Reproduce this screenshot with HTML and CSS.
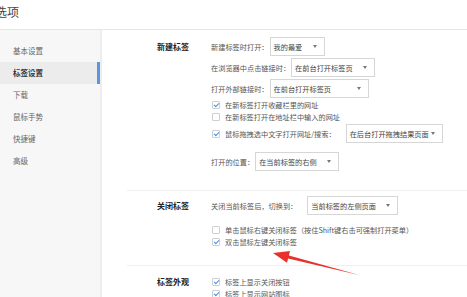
FILE: index.html
```html
<!DOCTYPE html>
<html>
  <head>
    <meta charset="utf-8" />
    <title>选项</title>
    <link rel="stylesheet" href="styles.css">
  </head>

  <body>
    <!-- 顶部标题 -->
    <div class="header">
      <h1 class="title">选项</h1>
    </div>

    <div class="layout">
      <!-- 左侧导航 -->
      <ul class="sidebar">
        <li class="nav-item">基本设置</li>
        <li class="nav-item active">标签设置</li>
        <li class="nav-item">下载</li>
        <li class="nav-item">鼠标手势</li>
        <li class="nav-item">快捷键</li>
        <li class="nav-item">高级</li>
      </ul>

      <!-- 右侧设置内容 -->
      <div class="content">
        <div class="section sec-new">
          <div class="sec-title">新建标签</div>
          <div class="sec-body">
            <div class="row">新建标签时打开：<span class="select sel-home">我的最爱<i class="caret"></i></span></div>
            <div class="row">在浏览器中点击链接时：<span class="select sel-click">在前台打开标签页<i class="caret"></i></span></div>
            <div class="row">打开外部链接时：<span class="select sel-ext">在前台打开标签页<i class="caret"></i></span></div>
            <div class="row check"><span class="box on"></span>在新标签打开收藏栏里的网址</div>
            <div class="row check"><span class="box"></span>在新标签打开在地址栏中输入的网址</div>
            <div class="row"><span class="box on"></span>鼠标拖拽选中文字打开网址/搜索：<span class="select sel-drag">在后台打开拖拽结果页面<i class="caret"></i></span></div>
            <div class="row spaced">打开的位置：<span class="select sel-pos">在当前标签的右侧<i class="caret"></i></span></div>
          </div>
        </div>

        <div class="section sec-close">
          <div class="sec-title">关闭标签</div>
          <div class="sec-body">
            <div class="row">关闭当前标签后，切换到：<span class="select sel-close">当前标签的左侧页面<i class="caret"></i></span></div>
            <div class="row check spaced-lg"><span class="box"></span>单击鼠标右键关闭标签（按住Shift键右击可强制打开菜单）</div>
            <div class="row check"><span class="box on"></span>双击鼠标左键关闭标签</div>
          </div>
        </div>

        <div class="section sec-look">
          <div class="sec-title short">标签外观</div>
          <div class="sec-body">
            <div class="row check"><span class="box on"></span>标签上显示关闭按钮</div>
            <div class="row check"><span class="box on"></span>标签上显示网站图标</div>
          </div>
        </div>
      </div>
    </div>

    <!-- 红色标注箭头 -->
    <svg class="arrow" width="467" height="297" viewBox="0 0 467 297">
      <polygon points="273,253 290,251.1 288.9,255.4 360,275.3 288.1,258.4 287,262.7" fill="#e8312c" />
    </svg>
  </body>
</html>
```

FILE: styles.css
```css
/* 基础样式 */
html,
body {
  margin: 0;
  padding: 0;
  height: 100%;
  overflow: hidden;
  background: #fff;
  font-family: "Noto Sans CJK SC", "Noto Sans", sans-serif;
  color: #555;
}

/* 顶部标题 */
.header {
  height: 29px;
  border-bottom: 1px solid #e6e6e6;
  padding-top: 6px;
  box-sizing: border-box;
  height: 30px;
}
.title {
  margin: 0 0 0 -5px;
  font-size: 12px;
  font-weight: normal;
  line-height: 1;
  color: #444;
}

.layout {
  display: flex;
  height: calc(100% - 30px);
}

/* 左侧导航 */
.sidebar {
  width: 100px;
  margin: 0;
  padding: 10px 0 0;
  list-style: none;
  background: #f7f7f7;
  border-right: 2px solid #ededed;
}
.nav-item {
  position: relative;
  height: 22px;
  line-height: 22px;
  padding-left: 13px;
  font-size: 7.5px;
  color: #666;
}
.nav-item.active {
  background: #ececec;
  color: #333;
  font-weight: bold;
}
.nav-item.active::after {
  content: "";
  position: absolute;
  right: 0;
  top: 0;
  bottom: 0;
  width: 3px;
  background: #5b95e3; /* 选中项蓝条 */
}

/* 右侧内容 */
.content {
  flex: 1;
  padding-left: 25px;
}
.section {
  display: flex;
  border-bottom: 1px solid #efefef;
}
.sec-new {
  padding: 6px 0 18px;
}
.sec-close {
  padding: 4px 0 17px;
}
.sec-look {
  padding: 10px 0 0;
  border-bottom: none;
}
.sec-title {
  flex: none;
  width: 54px;
  margin-left: 30px;
  height: 21px;
  line-height: 21px;
  font-size: 8px;
  font-weight: bold;
  color: #222;
}
.sec-title.short {
  height: 12px;
  line-height: 12px;
}
.sec-body {
  flex: 1;
}

.row {
  display: flex;
  align-items: center;
  height: 21px;
  font-size: 7.2px;
  white-space: nowrap;
}
.row.check {
  height: 12px;
}
.row.spaced {
  margin-top: 7px;
}
.row.spaced-lg {
  margin-top: 8px;
}

/* 下拉框 */
.select {
  display: inline-flex;
  align-items: center;
  justify-content: space-between;
  box-sizing: border-box;
  height: 19px;
  margin-left: 1px;
  padding: 0 7px 0 3px;
  border: 1px solid #d6d6d6;
  background: #fff;
  color: #444;
}
.caret {
  width: 0;
  height: 0;
  border-left: 2.5px solid transparent;
  border-right: 2.5px solid transparent;
  border-top: 3px solid #777;
}
.sel-home { width: 55px; }
.sel-click { width: 84px; }
.sel-ext { width: 99px; }
.sel-drag { width: 97px; margin-left: 10px; }
.sel-pos { width: 84px; }
.sel-close { width: 91px; margin-left: 10px; }

/* 复选框 */
.box {
  position: relative;
  flex: none;
  box-sizing: border-box;
  width: 8px;
  height: 8px;
  margin: 0 5px 0 1px;
  border: 1px solid #cfcfcf;
  border-radius: 1px;
  background: #fff;
}
.box.on::after {
  content: "";
  position: absolute;
  left: 2px;
  top: 0;
  width: 2px;
  height: 4px;
  border: solid #4a8fe0;
  border-width: 0 1px 1px 0;
  transform: rotate(45deg);
}

/* 标注箭头 */
.arrow {
  position: absolute;
  left: 0;
  top: 0;
  pointer-events: none;
}
```
